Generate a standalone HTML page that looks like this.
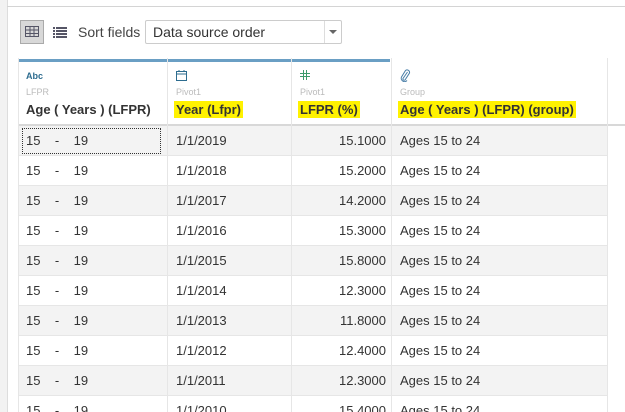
<!DOCTYPE html><html><head><style>
html,body{margin:0;width:625px;height:412px;overflow:hidden}
body{background:#fff;font-family:"Liberation Sans",sans-serif;position:relative}
.a{position:absolute}
.hl{background:#fff200;padding:1px 2px;margin-left:-2px}
.row{position:absolute;left:18px;width:589px;height:30px;border-bottom:1px solid #e6e6e6;box-sizing:border-box;font-size:13px;color:#333}
.row div{position:absolute;top:0;line-height:29px}
.vl{position:absolute;top:58px;width:1px;height:354px;background:#e6e6e6}
</style></head><body>
<div class="a" style="left:0;top:0;width:7px;height:412px;background:#f2f2f2;border-right:1px solid #ddd"></div>
<div class="a" style="left:7px;top:6px;width:618px;height:1px;background:#d4d4d4"></div>
<div class="a" style="left:20px;top:20px;width:24px;height:24px;background:#d8d8d8;border:1px solid #aaa;box-sizing:border-box"></div>
<svg class="a" style="left:25px;top:26px" width="14" height="12"><g stroke="#556" fill="none" stroke-width="1"><rect x=".5" y=".5" width="13" height="10"/><line x1="0" y1="4" x2="14" y2="4"/><line x1="0" y1="7.5" x2="14" y2="7.5"/><line x1="5" y1="0" x2="5" y2="11"/><line x1="9" y1="0" x2="9" y2="11"/></g></svg>
<svg class="a" style="left:53px;top:27px" width="14" height="11"><g fill="#556"><rect x="0" y="0" width="2" height="2"/><rect x="3" y="0" width="11" height="2"/><rect x="0" y="3" width="2" height="2"/><rect x="3" y="3" width="11" height="2"/><rect x="0" y="6" width="2" height="2"/><rect x="3" y="6" width="11" height="2"/><rect x="0" y="9" width="2" height="2"/><rect x="3" y="9" width="11" height="2"/></g></svg>
<div class="a" style="left:78px;top:24px;font-size:14px;color:#444">Sort fields</div>
<div class="a" style="left:145px;top:20px;width:197px;height:24px;border:1px solid #ccc;box-sizing:border-box;border-radius:2px"></div>
<div class="a" style="left:153px;top:24px;font-size:14px;color:#333">Data source order</div>
<div class="a" style="left:324px;top:21px;width:1px;height:22px;background:#ddd"></div>
<div class="a" style="left:329px;top:30px;width:0;height:0;border-left:4px solid transparent;border-right:4px solid transparent;border-top:4px solid #666"></div>
<div class="a" style="left:18px;top:59px;width:372px;height:3px;background:#6a9fc4"></div>
<div class="a" style="left:18px;top:124px;width:607px;height:2px;background:#d8d8d8"></div>
<div class="a" style="left:607px;top:58px;width:1px;height:354px;background:#e6e6e6"></div>
<div class="a" style="left:26px;top:71px;font-size:9px;color:#2d6c8f;font-weight:bold">Abc</div>
<div class="a" style="left:26px;top:87px;font-size:9px;color:#bbb">LFPR</div>
<div class="a" style="left:26px;top:102px;font-size:13px;font-weight:bold;color:#333">Age ( Years ) (LFPR)</div>
<svg class="a" style="left:176px;top:70px" width="11" height="11"><g stroke="#2d6c8f" fill="none"><rect x=".5" y="1.5" width="10" height="9"/><line x1="0" y1="4" x2="11" y2="4"/><line x1="3" y1="0" x2="3" y2="2"/><line x1="8" y1="0" x2="8" y2="2"/></g></svg>
<div class="a" style="left:176px;top:87px;font-size:9px;color:#bbb">Pivot1</div>
<div class="a" style="left:176px;top:102px;font-size:13px;font-weight:bold;color:#333"><span class="hl">Year (Lfpr)</span></div>
<svg class="a" style="left:300px;top:70px" width="10" height="10"><g stroke="#3a9a6a" stroke-width="1"><line x1="3.5" y1="0" x2="3.5" y2="10"/><line x1="6.5" y1="0" x2="6.5" y2="10"/><line x1="0" y1="3.5" x2="10" y2="3.5"/><line x1="0" y1="6.5" x2="10" y2="6.5"/></g></svg>
<div class="a" style="left:300px;top:87px;font-size:9px;color:#bbb">Pivot1</div>
<div class="a" style="left:300px;top:102px;font-size:13px;font-weight:bold;color:#333"><span class="hl">LFPR (%)</span></div>
<svg class="a" style="left:400px;top:69px" width="11" height="13"><path d="M7.5 3 L3 9.5 A1.3 1.3 0 0 0 5 11 L9.5 4 A2.5 2.5 0 0 0 5.5 1.5 L1.5 8 A3.3 3.3 0 0 0 7 11.5" stroke="#4a7fa8" fill="none" stroke-width="1"/></svg>
<div class="a" style="left:400px;top:87px;font-size:9px;color:#bbb">Group</div>
<div class="a" style="left:400px;top:102px;font-size:13px;font-weight:bold;color:#333"><span class="hl">Age ( Years ) (LFPR) (group)</span></div>
<div id="rows"></div>
<div class="a" style="left:22px;top:128px;width:139px;height:26px;border:1px dotted #333;box-sizing:border-box"></div>
<div class="vl" style="left:18px"></div><div class="vl" style="left:167px"></div><div class="vl" style="left:291px"></div><div class="vl" style="left:391px"></div>
<script>
var v=[["2019","15.1000"],["2018","15.2000"],["2017","14.2000"],["2016","15.3000"],["2015","15.8000"],["2014","12.3000"],["2013","11.8000"],["2012","12.4000"],["2011","12.3000"],["2010","15.4000"]];
var h="";v.forEach(function(r,i){h+='<div class="row" style="top:'+(126+i*30)+'px;background:'+(i%2?'#fff':'#f3f3f3')+'"><div style="left:8px">15&nbsp;&nbsp;&nbsp;&nbsp;-&nbsp;&nbsp;&nbsp;&nbsp;19</div><div style="left:158px">1/1/'+r[0]+'</div><div style="left:255px;width:113px;text-align:right">'+r[1]+'</div><div style="left:382px">Ages 15 to 24</div></div>'});
document.getElementById("rows").innerHTML=h;
</script>
</body></html>
